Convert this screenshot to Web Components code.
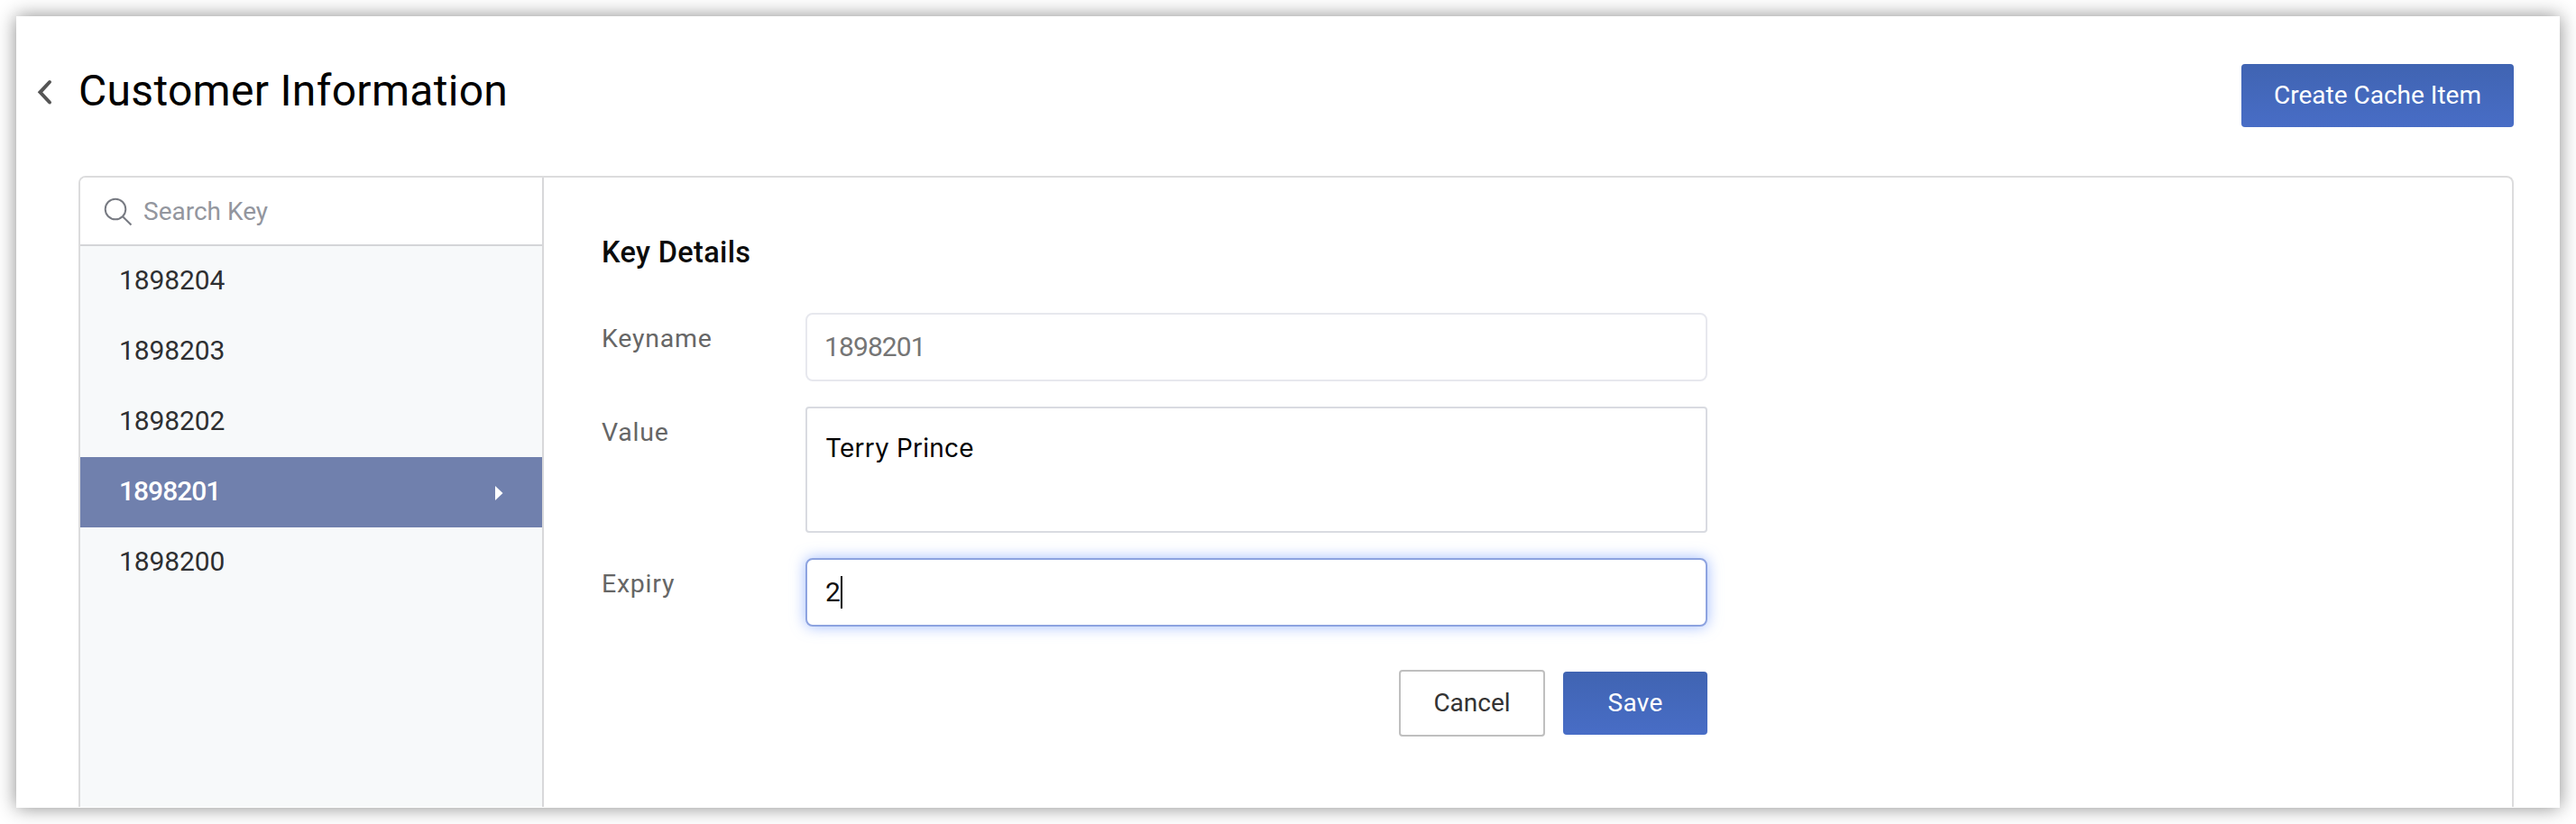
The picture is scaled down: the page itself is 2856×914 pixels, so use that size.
<!DOCTYPE html>
<html lang="en">
<head>
<meta charset="utf-8">
<title>Customer Information</title>
<style>
html, body { margin: 0; height: 100%; background: #fff; }
body { font-family: Roboto, "Liberation Sans", sans-serif; overflow: hidden; }
</style>
</head>
<body>
<cache-window>
  <page-header slot="header" heading="Customer Information">
    <ui-button variant="primary" style="width:302px">Create Cache Item</ui-button>
  </page-header>
  <key-list slot="side">
    <key-item>1898204</key-item>
    <key-item>1898203</key-item>
    <key-item>1898202</key-item>
    <key-item selected>1898201</key-item>
    <key-item>1898200</key-item>
  </key-list>
  <key-details heading="Key Details">
    <form-field label="Keyname" kind="readonly">1898201</form-field>
    <form-field label="Value" kind="area">Terry Prince</form-field>
    <form-field label="Expiry" kind="focused">2</form-field>
    <ui-button slot="actions" style="width:162px">Cancel</ui-button>
    <ui-button slot="actions" variant="primary" style="width:160px;--ls:.3px">Save</ui-button>
  </key-details>
</cache-window>
<script>
const define = (name, html) => customElements.define(name, class extends HTMLElement {
  constructor() {
    super();
    const root = this.attachShadow({ mode: 'open' });
    root.innerHTML = '<style>*{box-sizing:border-box}:host{box-sizing:border-box}</style>' + html;
  }
  connectedCallback() {
    this.shadowRoot.querySelectorAll('[data-attr]').forEach(n => {
      n.textContent = this.getAttribute(n.dataset.attr) || '';
    });
  }
});

define('cache-window', `
<style>
:host { display: block; height: 914px; padding: 18px; }
.frame { height: 878px; background: #fff; box-shadow: 0 0 20px rgba(0,0,0,.46); display: flex; flex-direction: column; overflow: hidden; }
.panel { flex: 1; margin: 0 51px 1px 69px; border: 2px solid #dcdcdd; border-bottom: 0; border-radius: 8px 8px 0 0; display: flex; overflow: hidden; }
</style>
<div class="frame">
  <slot name="header"></slot>
  <div class="panel"><slot name="side"></slot><slot></slot></div>
</div>`);

define('page-header', `
<style>
:host { display: flex; height: 177px; padding: 0 51px 0 22px; align-items: flex-start; flex: none; }
svg { flex: none; margin-top: 69px; }
h1 { margin: 55px auto 0 29px; font-weight: 400; font-size: 48px; line-height: 56px; letter-spacing: .3px; color: #000; white-space: nowrap; }
.actions { margin-top: 53px; }
</style>
<svg width="18" height="30" viewBox="0 0 18 30" fill="none" stroke="#555" stroke-width="4" stroke-linecap="round" stroke-linejoin="miter"><path d="M15 4 4.500 15.300 15 26.500"/></svg>
<h1 data-attr="heading"></h1>
<div class="actions"><slot></slot></div>`);

define('ui-button', `
<style>
:host { display: flex; align-items: center; justify-content: center; height: 74px; border: 2px solid #bfbfbf; border-radius: 4px; background: #fff; color: #333; font-size: 28px; letter-spacing: var(--ls, 0); white-space: nowrap; padding-bottom: 1px; }
:host([variant=primary]) { height: 70px; border: 0; border-radius: 4px; color: #fff; background: linear-gradient(#4064b2, #486dc6); padding-bottom: 1px; }
</style><slot></slot>`);

define('key-list', `
<style>
:host { display: block; width: 514px; flex: none; border-right: 2px solid #d8d8da; background: #f7f9fa; }
.search { display: flex; align-items: center; height: 76px; border-bottom: 2px solid #d4d5d8; background: #fff; padding-left: 26px; color: #93969e; font-size: 28px; }
svg { margin: 1px 12px 0 0; }
</style>
<div class="search">
  <svg width="32" height="32" viewBox="0 0 32 32" fill="none" stroke="#777a82" stroke-width="2"><circle cx="13" cy="13" r="11.300"/><path d="M20.800 21 30.500 30.500"/></svg>
  <span>Search Key</span>
</div>
<slot></slot>`);

define('key-item', `
<style>
:host { display: flex; align-items: center; justify-content: space-between; height: 78px; padding: 0 43px 4px 43px; font-size: 30px; letter-spacing: -.1px; color: #2e2f31; }
svg { display: none; margin-top: 6px; }
:host([selected]) { background: #7080ad; color: #fff; font-weight: 500; letter-spacing: -1px; }
:host([selected]) svg { display: block; }
</style>
<slot></slot>
<svg width="10" height="16" viewBox="0 0 10 16" fill="#fff"><path d="M1 0 9.500 8 1 16z"/></svg>`);

define('key-details', `
<style>
:host { display: block; width: 1290px; padding: 63px 0 0 63px; }
h2 { margin: 0 0 47px 1px; height: 40px; font-size: 32.500px; line-height: 40px; font-weight: 500; letter-spacing: .35px; color: #0c0c0c; }
.fields { display: flex; flex-direction: column; gap: 28px; }
.actions { display: flex; justify-content: flex-end; align-items: center; gap: 20px; margin-top: 48px; }
</style>
<h2 data-attr="heading"></h2>
<div class="fields"><slot></slot></div>
<div class="actions"><slot name="actions"></slot></div>`);

define('form-field', `
<style>
:host { display: flex; align-items: flex-start; }
label { width: 227px; flex: none; padding: 13px 0 0 1px; font-size: 28.500px; line-height: 32px; letter-spacing: .75px; color: #666; }
.box { width: 1000px; height: 76px; border: 2px solid #e7e8ee; border-radius: 8px; padding: 0 19px 2px; display: flex; align-items: center; font-size: 30px; color: #757575; letter-spacing: -.9px; background: #fff; }
:host([kind=area]) .box { height: 140px; border-color: #d9dbe1; border-radius: 4px; align-items: flex-start; padding: 26px 20px; font: 28px/36px Inter, sans-serif; letter-spacing: .2px; color: #000; }
:host([kind=focused]) .box { border-color: #8da3e0; box-shadow: 0 0 16px rgba(100,145,255,.6); color: #111; padding-left: 20px; }
.caret { display: none; width: 2px; height: 36px; background: #000; margin: 2px 0 0 1px; }
:host([kind=focused]) .caret { display: block; }
</style>
<label data-attr="label"></label>
<div class="box"><slot></slot><span class="caret"></span></div>`);
</script>
</body>
</html>
